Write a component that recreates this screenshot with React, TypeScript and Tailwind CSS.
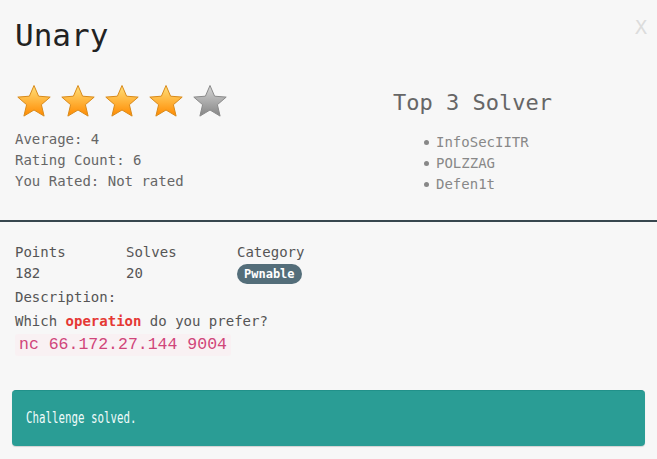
import * as React from 'react';

const mono = { fontFamily: '"DejaVu Sans Mono", "Liberation Mono", monospace' };

function Star({ filled, id }: { filled: boolean; id: string }) {
  const top = filled ? '#ffe07a' : '#d6d6d6';
  const bottom = filled ? '#ff8a00' : '#858585';
  const stroke = filled ? '#d98a1a' : '#8a8a8a';
  return (
    <svg width="38" height="38" viewBox="0 0 38 38">
      <defs>
        <linearGradient id={id} x1="0" y1="0" x2="0" y2="1">
          <stop offset="0" stopColor={top} />
          <stop offset="1" stopColor={bottom} />
        </linearGradient>
      </defs>
      <path
        d="M19 2.5 L23.6 13.2 L35.2 14.1 L26.4 21.7 L29.1 33.1 L19 27 L8.9 33.1 L11.6 21.7 L2.8 14.1 L14.4 13.2 Z"
        fill={`url(#${id})`}
        stroke={stroke}
        strokeWidth="1"
        strokeLinejoin="round"
      />
    </svg>
  );
}

const solvers = ['InfoSecIITR', 'POLZZAG', 'Defen1t'];

export default function App() {
  return (
    <div className="relative h-[459px] w-[657px] overflow-hidden bg-[#f7f7f7]" style={mono}>
      <span className="absolute right-[10px] top-[12px] text-[20px] text-[#dcdcdc]">X</span>

      <div className="flex h-[220px] flex-col px-[15px] pt-[13px]">
        <h1 className="text-[31px] leading-[44px] text-[#222]">Unary</h1>
        <div className="mt-[26px] flex">
          <div className="w-[378px]">
            <div className="flex gap-[6px]">
              {[0, 1, 2, 3, 4].map((i) => (
                <Star key={i} filled={i < 4} id={`star-${i}`} />
              ))}
            </div>
            <div className="mt-[8px] text-[14px] leading-[21px] text-[#666]">
              <div>Average: 4</div>
              <div>Rating Count: 6</div>
              <div>You Rated: Not rated</div>
            </div>
          </div>
          <div className="pt-[5px]">
            <h2 className="text-[22px] leading-[30px] text-[#666]">Top 3 Solver</h2>
            <ul className="mt-[14px] pl-[31px] text-[14px] leading-[21px] text-[#888]">
              {solvers.map((s) => (
                <li key={s} className="flex items-center">
                  <span className="mr-[7px] inline-block h-[5px] w-[5px] rounded-full bg-[#888]" />
                  {s}
                </li>
              ))}
            </ul>
          </div>
        </div>
      </div>

      <div className="h-[2px] bg-[#37474f]" />

      <div className="px-[15px] pt-[20px] text-[14px] text-[#555]">
        <div className="grid w-[333px] grid-cols-3 leading-[21px]">
          <div>Points</div>
          <div>Solves</div>
          <div>Category</div>
          <div>182</div>
          <div>20</div>
          <div>
            <span className="inline-block rounded-full bg-[#546e7a] px-[7px] text-[12px] font-bold leading-[20px] text-white">
              Pwnable
            </span>
          </div>
        </div>
        <div className="mt-[3px] leading-[21px]">Description:</div>
        <div className="mt-[3px] leading-[21px]">
          Which <span className="font-bold text-[#e53935]">operation</span> do you prefer?
        </div>
        <div className="mt-[2px]">
          <code
            className="inline-block rounded-[3px] bg-[#f9f1f3] px-[4px] text-[16.5px] leading-[22px] text-[#d0457a]"
            style={{ fontFamily: '"Liberation Mono", monospace' }}
          >
            nc 66.172.27.144 9004
          </code>
        </div>
      </div>

      <div className="mx-[12px] mt-[34px] flex h-[56px] items-center rounded-[4px] border-t border-[#21918a] bg-[#2a9d95] px-[14px] shadow-[0_1px_1px_rgba(0,0,0,0.15)]">
        <span className="origin-left scale-x-[0.72] text-[15px] text-[#f0fbfa]">Challenge solved.</span>
      </div>
    </div>
  );
}
